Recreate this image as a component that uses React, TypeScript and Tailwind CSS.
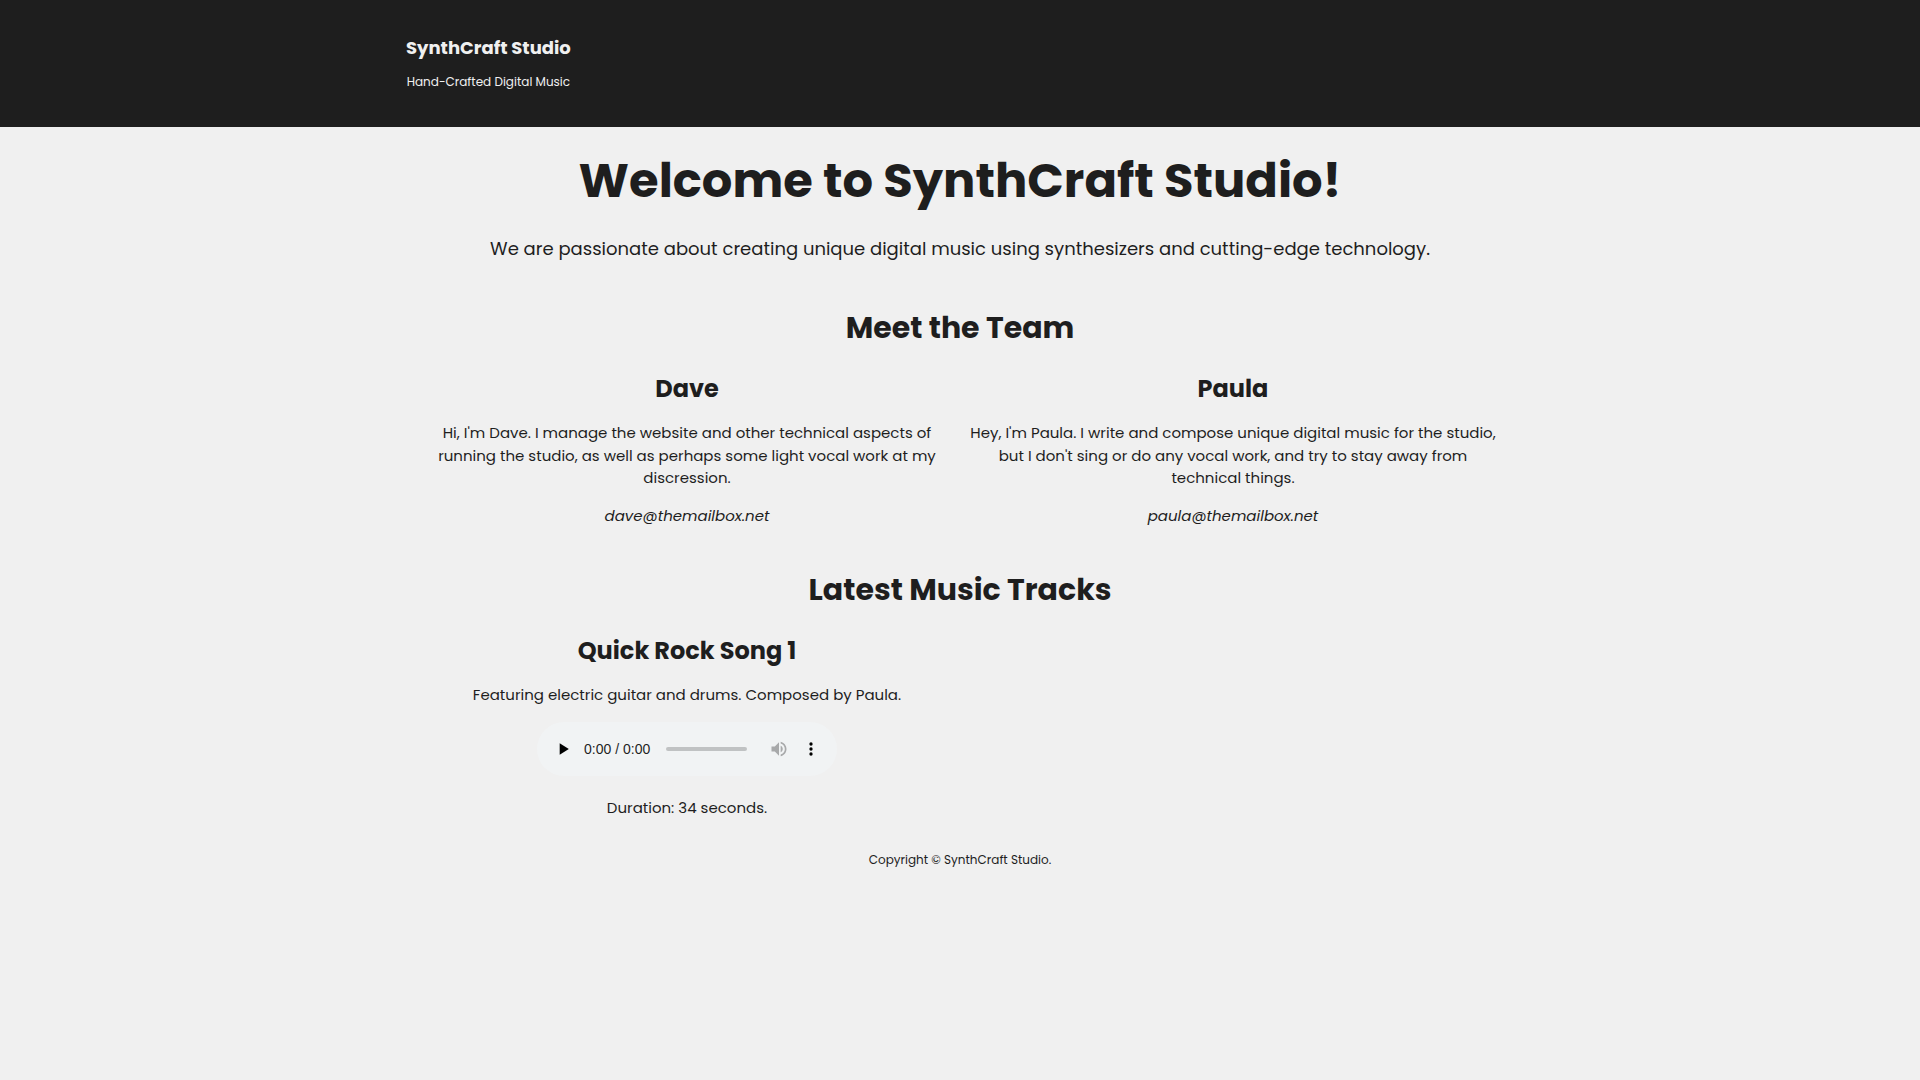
import React from 'react';

interface Member {
  name: string;
  bio: string;
  email: string;
}

interface Track {
  title: string;
  description: string;
  duration: string;
  src: string;
}

const team: Member[] = [
  {
    name: 'Dave',
    bio: "Hi, I'm Dave. I manage the website and other technical aspects of running the studio, as well as perhaps some light vocal work at my discression.",
    email: 'dave@themailbox.net',
  },
  {
    name: 'Paula',
    bio: "Hey, I'm Paula. I write and compose unique digital music for the studio, but I don't sing or do any vocal work, and try to stay away from technical things.",
    email: 'paula@themailbox.net',
  },
];

const tracks: Track[] = [
  {
    title: 'Quick Rock Song 1',
    description: 'Featuring electric guitar and drums. Composed by Paula.',
    duration: '34 seconds',
    src: 'quick-rock-song-1.mp3',
  },
];

const SectionTitle: React.FC<{ children: React.ReactNode }> = ({ children }) => (
  <h2 className="text-[30px] leading-[45px] font-bold">{children}</h2>
);

const CardTitle: React.FC<{ children: React.ReactNode }> = ({ children }) => (
  <h3 className="text-2xl leading-9 font-bold">{children}</h3>
);

export default function App() {
  return (
    <div className="min-h-screen bg-[#f0f0f0] text-[#1e1e1e] font-[Poppins,Inter,sans-serif] text-[15px] leading-normal">
      {/* Header */}
      <header className="bg-[#1e1e1e] text-[#f0f0f0] pt-[34px] pb-9">
        <div className="max-w-[1108px] mx-auto flex">
          <div className="text-center">
            <p className="text-lg leading-[27px] font-bold">SynthCraft Studio</p>
            <p className="mt-3 text-xs leading-[18px]">Hand-Crafted Digital Music</p>
          </div>
        </div>
      </header>

      <main className="max-w-[1092px] mx-auto pt-[18px] text-center">
        {/* Intro */}
        <section>
          <h1 className="text-5xl leading-[72px] font-bold">Welcome to SynthCraft Studio!</h1>
          <p className="mt-[18px] text-lg leading-[27px]">
            We are passionate about creating unique digital music using synthesizers and cutting-edge technology.
          </p>
        </section>

        {/* Team */}
        <section className="mt-[43px]">
          <SectionTitle>Meet the Team</SectionTitle>
          <div className="mt-[21px] grid grid-cols-2">
            {team.map((m) => (
              <article key={m.name} className="px-2">
                <CardTitle>{m.name}</CardTitle>
                <p className="mt-[15px]">{m.bio}</p>
                <p className="mt-[15px]">
                  <a href={`mailto:${m.email}`} className="italic">{m.email}</a>
                </p>
              </article>
            ))}
          </div>
        </section>

        {/* Tracks */}
        <section className="mt-10">
          <SectionTitle>Latest Music Tracks</SectionTitle>
          <div className="mt-[21px] grid grid-cols-2">
            {tracks.map((t) => (
              <article key={t.title} className="px-2">
                <CardTitle>{t.title}</CardTitle>
                <p className="mt-[15px]">{t.description}</p>
                <audio
                  controls
                  preload="none"
                  src={t.src}
                  aria-label={t.title}
                  className="mt-[15px] mx-auto [&::-webkit-media-controls-current-time-display]:font-['Liberation_Sans'] [&::-webkit-media-controls-time-remaining-display]:font-['Liberation_Sans']"
                />
                <p className="mt-[21px]">Duration: {t.duration}.</p>
              </article>
            ))}
          </div>
        </section>
      </main>

      <footer className="mt-8 pb-5 text-center text-xs leading-[18px]">
        Copyright © SynthCraft Studio.
      </footer>
    </div>
  );
}
